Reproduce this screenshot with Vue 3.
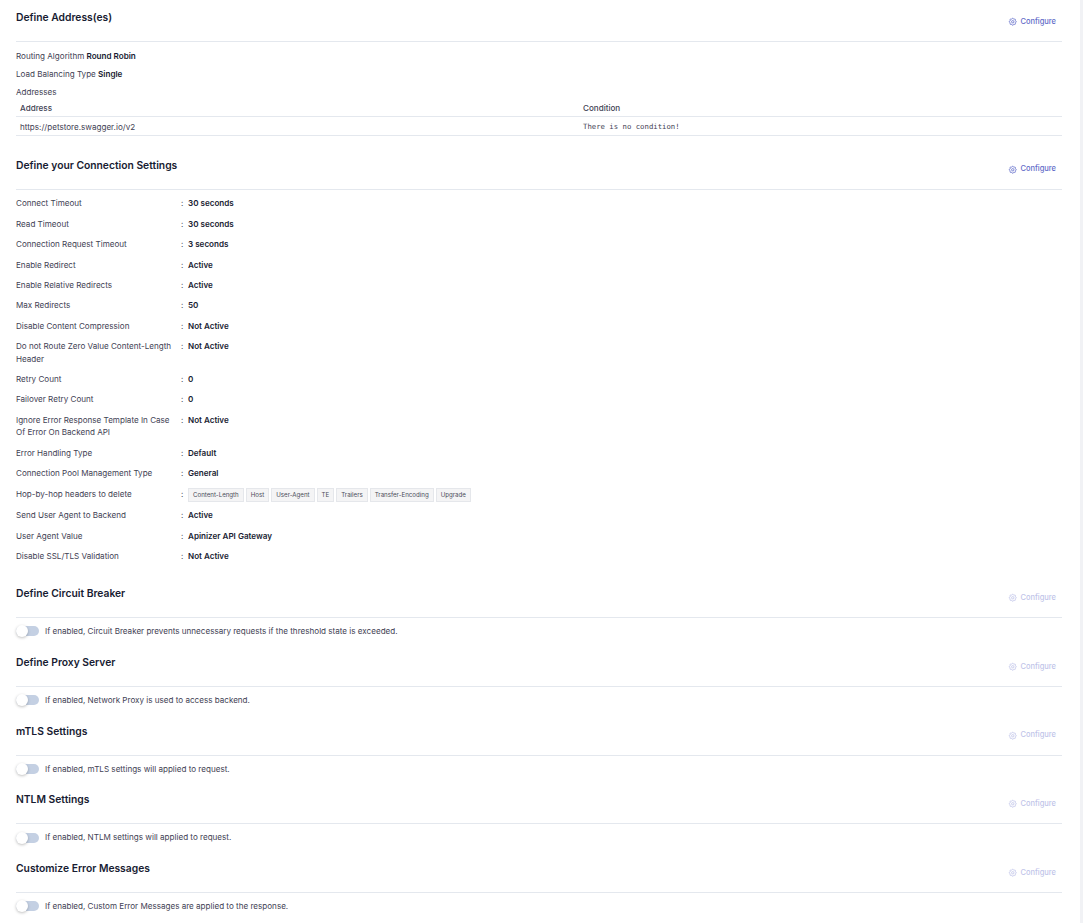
<template>
  <div class="page">
    <div class="content">
      <section class="block">
        <div class="block_head">
          <h3>Define Address(es)</h3>
          <a class="configure"><svg viewBox="0 0 24 24" class="gear"><path :d="gearPath" /><circle cx="12" cy="12" r="3" /></svg>Configure</a>
        </div>
        <div class="address_body">
          <p>Routing Algorithm <b>Round Robin</b></p>
          <p>Load Balancing Type <b>Single</b></p>
          <p>Addresses</p>
          <table>
            <thead>
              <tr><th class="col_address">Address</th><th>Condition</th></tr>
            </thead>
            <tbody>
              <tr><td>https://petstore.swagger.io/v2</td><td class="mono">There is no condition!</td></tr>
            </tbody>
          </table>
        </div>
      </section>

      <section class="block settings">
        <div class="block_head">
          <h3>Define your Connection Settings</h3>
          <a class="configure"><svg viewBox="0 0 24 24" class="gear"><path :d="gearPath" /><circle cx="12" cy="12" r="3" /></svg>Configure</a>
        </div>
        <div class="rows">
          <div v-for="row in settings" :key="row.label" class="row">
            <div class="row_label">{{ row.label }}</div>
            <div class="row_colon">:</div>
            <div v-if="row.tags" class="tags">
              <span v-for="tag in row.tags" :key="tag" class="tag">{{ tag }}</span>
            </div>
            <div v-else class="row_value">{{ row.value }}</div>
          </div>
        </div>
      </section>

      <section v-for="item in toggles" :key="item.title" class="block toggle_block">
        <div class="block_head">
          <h3>{{ item.title }}</h3>
          <a class="configure disabled"><svg viewBox="0 0 24 24" class="gear"><path :d="gearPath" /><circle cx="12" cy="12" r="3" /></svg>Configure</a>
        </div>
        <div class="toggle_row">
          <span class="switch"><span class="knob"></span></span>
          <span>{{ item.text }}</span>
        </div>
      </section>
    </div>
    <div class="scroll_strip"></div>
  </div>
</template>

<script setup>
const gearPath =
  "M10.325 4.317c.426-1.756 2.924-1.756 3.35 0a1.724 1.724 0 0 0 2.573 1.066c1.543-.94 3.31.826 2.37 2.37a1.724 1.724 0 0 0 1.065 2.572c1.756.426 1.756 2.924 0 3.35a1.724 1.724 0 0 0-1.066 2.573c.94 1.543-.826 3.31-2.37 2.37a1.724 1.724 0 0 0-2.572 1.065c-.426 1.756-2.924 1.756-3.35 0a1.724 1.724 0 0 0-2.573-1.066c-1.543.94-3.31-.826-2.37-2.37a1.724 1.724 0 0 0-1.065-2.572c-1.756-.426-1.756-2.924 0-3.35a1.724 1.724 0 0 0 1.066-2.573c-.94-1.543.826-3.31 2.37-2.37c1 .608 2.296.07 2.572-1.065z";

const settings = [
  { label: "Connect Timeout", value: "30 seconds" },
  { label: "Read Timeout", value: "30 seconds" },
  { label: "Connection Request Timeout", value: "3 seconds" },
  { label: "Enable Redirect", value: "Active" },
  { label: "Enable Relative Redirects", value: "Active" },
  { label: "Max Redirects", value: "50" },
  { label: "Disable Content Compression", value: "Not Active" },
  { label: "Do not Route Zero Value Content-Length Header", value: "Not Active" },
  { label: "Retry Count", value: "0" },
  { label: "Failover Retry Count", value: "0" },
  { label: "Ignore Error Response Template In Case Of Error On Backend API", value: "Not Active" },
  { label: "Error Handling Type", value: "Default" },
  { label: "Connection Pool Management Type", value: "General" },
  {
    label: "Hop-by-hop headers to delete",
    tags: ["Content-Length", "Host", "User-Agent", "TE", "Trailers", "Transfer-Encoding", "Upgrade"],
  },
  { label: "Send User Agent to Backend", value: "Active" },
  { label: "User Agent Value", value: "Apinizer API Gateway" },
  { label: "Disable SSL/TLS Validation", value: "Not Active" },
];

const toggles = [
  { title: "Define Circuit Breaker", text: "If enabled, Circuit Breaker prevents unnecessary requests if the threshold state is exceeded." },
  { title: "Define Proxy Server", text: "If enabled, Network Proxy is used to access backend." },
  { title: "mTLS Settings", text: "If enabled, mTLS settings will applied to request." },
  { title: "NTLM Settings", text: "If enabled, NTLM settings will applied to request." },
  { title: "Customize Error Messages", text: "If enabled, Custom Error Messages are applied to the response." },
];
</script>

<style>
html, body {
  background: #fff;
  overflow: hidden;
}
</style>

<style scoped>
.page {
  display: flex;
  height: 923px;
  font-family: Inter, "Liberation Sans", sans-serif;
  font-size: 8.08px;
  line-height: 12.5px;
  color: #3f4254;
}

.content {
  flex: 1;
  padding: 10px 18px 0 16px;
  overflow: hidden;
}

.scroll_strip {
  width: 3px;
  background: #f1f2f5;
}

.block_head {
  display: flex;
  justify-content: space-between;
  align-items: flex-start;
  height: 31px;
  border-bottom: 1px solid #e4e8ee;
}

h3 {
  margin: 0;
  font-size: 10.3px;
  line-height: 14px;
  font-weight: 600;
  color: #181c32;
}

.configure {
  display: flex;
  align-items: center;
  gap: 2.5px;
  margin-top: 5.75px;
  padding-right: 6px;
  font-size: 7.5px;
  line-height: 12px;
  font-weight: 500;
  color: #5f6bc8;
}

.configure.disabled {
  opacity: 0.4;
}

.gear {
  width: 9.5px;
  height: 9.5px;
  fill: none;
  stroke: currentColor;
  stroke-width: 2;
}

.address_body {
  padding-top: 8px;
}

.address_body p {
  margin: 0 0 5.7px;
}

b {
  font-weight: 600;
  color: #181c32;
}

table {
  width: 100%;
  border-collapse: collapse;
  margin-top: -7px;
}

th, td {
  padding: 4.25px 4px 1.25px;
  text-align: left;
  border-bottom: 1px solid #e4e8ee;
  font-weight: 500;
}

td {
  font-weight: 400;
}

th {
  color: #3f4254;
}

.col_address {
  width: 555px;
}

.mono {
  font-family: "DejaVu Sans Mono", monospace;
  font-size: 7.3px;
}

.settings {
  margin-top: 22px;
  padding-bottom: 7.3px;
}

.rows {
  display: flex;
  flex-direction: column;
  gap: 7.9px;
  padding-top: 7.9px;
}

.row {
  display: flex;
  align-items: flex-start;
}

.row_label {
  width: 160px;
  margin-right: 5px;
  flex: none;
}

.row_colon {
  width: 7px;
  flex: none;
}

.row_value {
  font-weight: 600;
  color: #181c32;
}

.tags {
  display: flex;
  gap: 2px;
}

.tag {
  padding: 0 4px;
  font-size: 6.15px;
  line-height: 12px;
  color: #4b4d5a;
  background: #f4f4f5;
  border: 1px solid #e5e7eb;
}

.toggle_block {
  margin-top: 16px;
}

.toggle_block + .toggle_block {
  margin-top: 17.25px;
}

.toggle_row {
  display: flex;
  align-items: center;
  gap: 6px;
  padding-top: 7px;
}

.switch {
  position: relative;
  width: 23px;
  height: 10px;
  border-radius: 5px;
  background: #c4d0e3;
}

.knob {
  position: absolute;
  left: 0;
  top: -1px;
  width: 12px;
  height: 12px;
  border-radius: 50%;
  background: #fff;
  box-shadow: 0 1px 3px rgba(0, 0, 0, 0.25);
}
</style>
